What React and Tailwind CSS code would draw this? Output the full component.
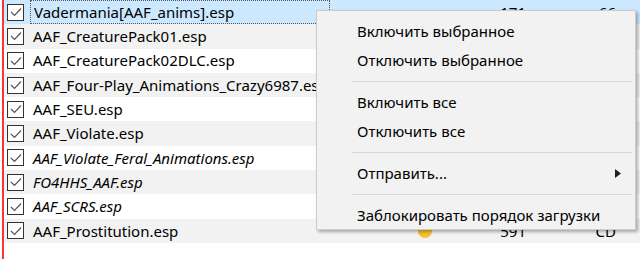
import React from 'react';

const plugins = [
  { name: 'Vadermania[AAF_anims].esp', italic: false, selected: true, a: '171', b: '66' },
  { name: 'AAF_CreaturePack01.esp', italic: false },
  { name: 'AAF_CreaturePack02DLC.esp', italic: false },
  { name: 'AAF_Four-Play_Animations_Crazy6987.esp', italic: false },
  { name: 'AAF_SEU.esp', italic: false },
  { name: 'AAF_Violate.esp', italic: false },
  { name: 'AAF_Violate_Feral_Animations.esp', italic: true },
  { name: 'FO4HHS_AAF.esp', italic: true },
  { name: 'AAF_SCRS.esp', italic: true },
  { name: 'AAF_Prostitution.esp', italic: false, a: '591', b: 'CD', icon: true },
];

const Check = () => (
  <div className="w-[17px] h-[17px] border border-[#333] bg-white flex items-center justify-center shrink-0">
    <svg width="12" height="10" viewBox="0 0 12 10">
      <path d="M1 5 L4.5 8.5 L11 1.5" fill="none" stroke="#555" strokeWidth="1.2" />
    </svg>
  </div>
);

const Row = ({ item, index }) => {
  const bg = item.selected ? 'bg-[#cce8ff]' : index % 2 === 1 ? 'bg-[#f2f2f2]' : 'bg-white';
  return (
    <div className={`flex items-center h-[24.3px] ${bg}`}>
      <div className="w-[3px] shrink-0" />
      <Check />
      <div className={`ml-[6px] h-full flex items-center pl-[3px] w-[300px] shrink-0 whitespace-nowrap overflow-hidden ${item.selected ? 'border border-dotted border-[#555]' : ''} ${item.italic ? 'italic' : ''}`}>
        {item.name}
      </div>
      <div className="flex items-center h-full">
        <div className="w-[106px] flex justify-end pr-[4px]">
          {item.icon && <div className="w-[14px] h-[14px] rounded-full bg-[#f2c230]" />}
        </div>
        <div className="w-[90px] text-right">{item.a}</div>
        <div className="w-[90px] text-right">{item.b}</div>
      </div>
    </div>
  );
};

const MenuItem = ({ children, arrow }) => (
  <div className="h-[29px] flex items-center pl-[40px] pr-[14px] justify-between">
    <span>{children}</span>
    {arrow && (
      <svg width="6" height="9" viewBox="0 0 6 9">
        <path d="M0 0 L6 4.5 L0 9 Z" fill="#222" />
      </svg>
    )}
  </div>
);

const Sep = () => <div className="ml-[35px] mr-[3px] my-[6px] h-px bg-[#d7d7d7]" />;

export default function App() {
  return (
    <div className="relative w-[640px] h-[259px] bg-white overflow-hidden text-[15px] text-black" style={{ fontFamily: '"Noto Sans", sans-serif' }}>
      <div className="flex h-full">
        <div className="w-[2px] shrink-0" />
        <div className="w-[2px] shrink-0 bg-[#f03a3a]" />
        <div className="flex-1 flex flex-col">
          {plugins.map((p, i) => (
            <Row key={p.name} item={p} index={i} />
          ))}
        </div>
      </div>
      <div className="absolute left-[316px] top-[10px] w-[320px] h-[220px] bg-[#f2f2f2] border border-[#cccccc] shadow-[2px_2px_3px_rgba(0,0,0,0.3)] pt-[6px]">
        <MenuItem>Включить выбранное</MenuItem>
        <MenuItem>Отключить выбранное</MenuItem>
        <Sep />
        <MenuItem>Включить все</MenuItem>
        <MenuItem>Отключить все</MenuItem>
        <Sep />
        <MenuItem arrow>Отправить...</MenuItem>
        <Sep />
        <MenuItem>Заблокировать порядок загрузки</MenuItem>
      </div>
    </div>
  );
}
